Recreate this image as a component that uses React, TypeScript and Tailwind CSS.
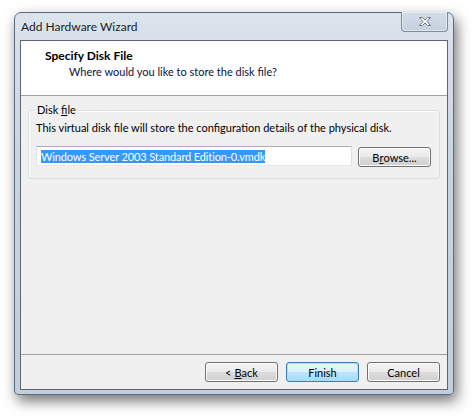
import React from "react";

const font = { fontFamily: 'Lato, "Noto Sans", sans-serif' };

function Btn({ children, primary = false }: { children: React.ReactNode; primary?: boolean }) {
  return (
    <div
      className={
        "w-[73px] h-[20px] rounded-[3px] border flex items-center justify-center text-[11px] leading-none text-black " +
        (primary
          ? "border-[#3c7fb1] bg-[linear-gradient(#eaf6fd_0%,#d9f0fc_50%,#bee6fd_50%,#a7d9f5_100%)] shadow-[inset_0_0_0_1px_#a9dcf5]"
          : "border-[#707070] bg-[linear-gradient(#f2f2f2_0%,#ebebeb_50%,#dddddd_50%,#cfcfcf_100%)] shadow-[inset_0_0_0_1px_#fcfcfc]")
      }
    >
      {children}
    </div>
  );
}

export default function App() {
  return (
    <div className="w-[472px] h-[416px] bg-white pt-[12px] pl-[14px]" style={font}>
      <div className="w-[440px] h-[383px] rounded-t-[7px] rounded-b-[4px] border border-[#5d6b7e] bg-[linear-gradient(180deg,#dbe3ec_0%,#c9d4e1_40%,#c3cedc_100%)] shadow-[3px_6px_14px_rgba(0,0,0,0.55)] flex flex-col">
        <div className="h-[27px] flex items-start pl-[6px] pr-[5px]">
          <div className="flex-1 h-full flex items-center text-[12px] text-[#1c1c1c]">Add Hardware Wizard</div>
          <div className="-mt-px w-[47px] h-[20px] rounded-b-[4px] border border-[#7f8a9a] border-t-0 bg-[linear-gradient(#d4dde8,#c5d0de)] shadow-[inset_0_0_0_1px_rgba(255,255,255,0.45)] flex items-center justify-center">
            <svg width="14" height="11" viewBox="0 0 14 11">
              <path
                d="M1.5 1.5 H4.5 L7 4 L9.5 1.5 H12.5 L9 5.5 L12.5 9.5 H9.5 L7 7 L4.5 9.5 H1.5 L5 5.5 Z"
                fill="#ffffff"
                stroke="#6d7786"
                strokeWidth="1"
                strokeLinejoin="round"
              />
            </svg>
          </div>
        </div>
        <div className="flex-1 mx-[5px] mb-[4px] border border-[#5f6470] bg-[#f0f0f0] flex flex-col">
          <div className="h-[55px] bg-white border-b border-[#a0a0a0] pt-[7px] text-[11px] leading-[16px]">
            <div className="pl-[24px] font-bold text-[12px] text-black">Specify Disk File</div>
            <div className="pl-[48px] text-[#101040]">Where would you like to store the disk file?</div>
          </div>
          <div className="flex-1 pt-[6px] px-[7px]">
            <fieldset className="border border-[#d5dfe5] rounded-[3px] px-[7px] pb-[11px] shadow-[inset_1px_1px_0_#ffffff]">
              <legend className="px-[1px] text-[11px] leading-[16px] text-black">
                Disk <span className="underline">f</span>ile
              </legend>
              <div className="pt-[2px] text-[11px] leading-[16px] text-black whitespace-nowrap">
                This virtual disk file will store the configuration details of the physical disk.
              </div>
              <div className="mt-[10px] flex gap-[6px]">
                <div className="w-[316px] h-[20px] border border-[#abadb3] border-l-[#e2e3ea] border-r-[#dbdfe6] border-b-[#e3e9ef] bg-white pl-[4px] flex items-center">
                  <span className="bg-[#3399ff] text-white text-[11px] leading-[13px] tracking-[-0.12px] whitespace-nowrap">
                    Windows Server 2003 Standard Edition-0.vmdk
                  </span>
                </div>
                <div className="mt-px">
                  <Btn>
                    B<span className="underline">r</span>owse...
                  </Btn>
                </div>
              </div>
            </fieldset>
          </div>
          <div className="h-[35px] border-t border-[#a0a0a0] flex justify-end gap-[8px] pr-[7px] pt-[7px]">
            <Btn>
              &lt;<span className="underline ml-[3px]">B</span>ack
            </Btn>
            <Btn primary>Finish</Btn>
            <Btn>Cancel</Btn>
          </div>
        </div>
      </div>
    </div>
  );
}
